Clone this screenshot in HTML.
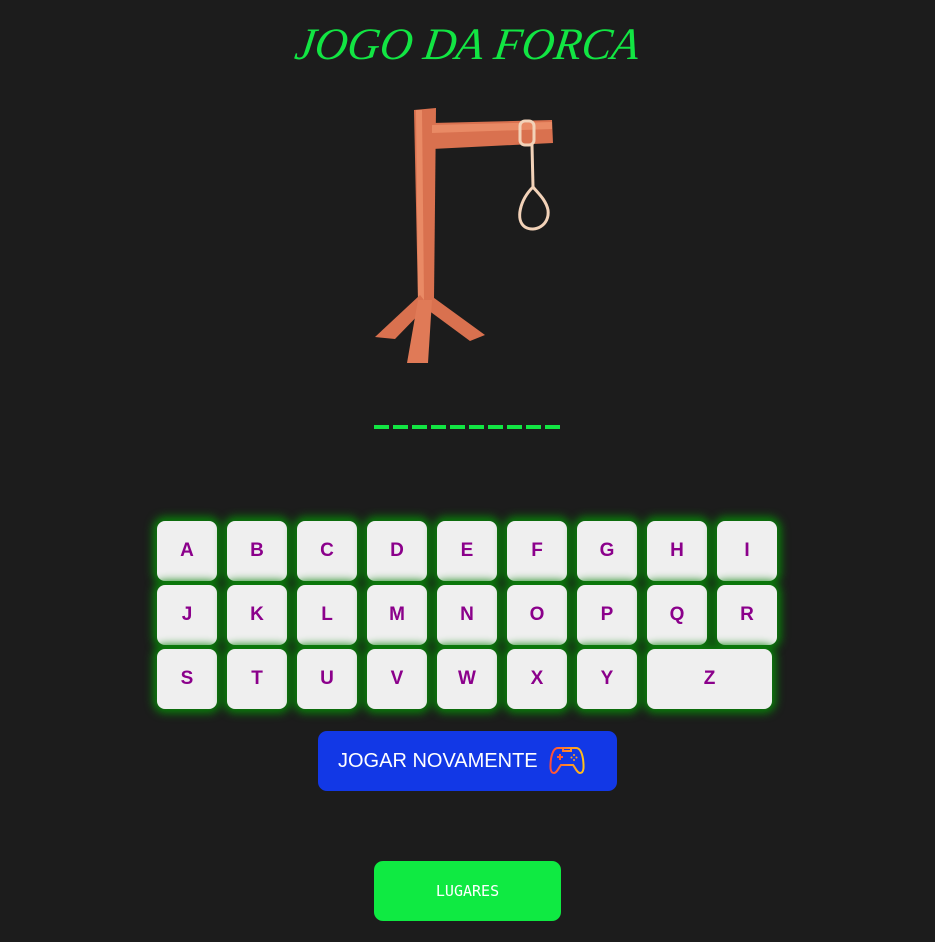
<!DOCTYPE html>
<html><head><style>
body{margin:0;background:#1c1c1c;width:935px;height:942px;position:relative;overflow:hidden;font-family:"Liberation Sans",sans-serif}
h1{position:absolute;top:18px;left:0;width:935px;text-align:center;margin:0;font:italic 45px "Liberation Serif",serif;color:#12e543;transform:skewX(-8deg)}
.k{position:absolute;width:60px;height:60px;background:#efefef;border-radius:8px;box-shadow:0 0 9px 4px #0a820a;color:#8b008b;font-weight:bold;font-size:19px;display:flex;align-items:center;justify-content:center}
.d{position:absolute;top:425px;height:4px;width:15px;background:#12e543}
</style></head><body>
<h1>JOGO DA FORCA</h1>
<svg style="position:absolute;left:370px;top:105px" width="190" height="262">
<polygon points="44,5 66,3 64,195 48,195" fill="#d9714f"/>
<polygon points="46,5 52,5 54,195 48,195" fill="#e98a65"/>
<polygon points="62,18 182,15 183,38 62,44" fill="#d9714f"/>
<polygon points="62,20 182,17 182,24 62,28" fill="#e98a65"/>
<polygon points="50,190 5,232 25,234 58,200" fill="#d9714f"/>
<polygon points="60,190 115,230 100,236 58,205" fill="#d9714f"/>
<polygon points="48,195 62,195 58,258 37,258" fill="#e07a57"/>
<rect x="150" y="16" width="14" height="24" rx="5" fill="none" stroke="#f2d2b8" stroke-width="3"/>
<line x1="162" y1="40" x2="163" y2="82" stroke="#f2d2b8" stroke-width="3"/>
<path d="M163 82 C150 95 145 115 155 122 C165 128 180 120 178 105 C176 95 168 88 163 82Z" fill="none" stroke="#f2d2b8" stroke-width="3"/>
</svg>
<div class="d" style="left:374px"></div><div class="d" style="left:393px"></div><div class="d" style="left:412px"></div><div class="d" style="left:431px"></div><div class="d" style="left:450px"></div><div class="d" style="left:469px"></div><div class="d" style="left:488px"></div><div class="d" style="left:507px"></div><div class="d" style="left:526px"></div><div class="d" style="left:545px"></div>
<div class="k" style="left:157px;top:521px">A</div><div class="k" style="left:227px;top:521px">B</div><div class="k" style="left:297px;top:521px">C</div><div class="k" style="left:367px;top:521px">D</div><div class="k" style="left:437px;top:521px">E</div><div class="k" style="left:507px;top:521px">F</div><div class="k" style="left:577px;top:521px">G</div><div class="k" style="left:647px;top:521px">H</div><div class="k" style="left:717px;top:521px">I</div>
<div class="k" style="left:157px;top:585px">J</div><div class="k" style="left:227px;top:585px">K</div><div class="k" style="left:297px;top:585px">L</div><div class="k" style="left:367px;top:585px">M</div><div class="k" style="left:437px;top:585px">N</div><div class="k" style="left:507px;top:585px">O</div><div class="k" style="left:577px;top:585px">P</div><div class="k" style="left:647px;top:585px">Q</div><div class="k" style="left:717px;top:585px">R</div>
<div class="k" style="left:157px;top:649px">S</div><div class="k" style="left:227px;top:649px">T</div><div class="k" style="left:297px;top:649px">U</div><div class="k" style="left:367px;top:649px">V</div><div class="k" style="left:437px;top:649px">W</div><div class="k" style="left:507px;top:649px">X</div><div class="k" style="left:577px;top:649px">Y</div><div class="k" style="left:647px;top:649px;width:125px">Z</div>
<div style="position:absolute;left:318px;top:731px;width:299px;height:60px;background:#1238e6;border-radius:9px;color:#fff;font-size:20px;line-height:60px">
<span style="position:absolute;left:20px">JOGAR NOVAMENTE</span>
<svg style="position:absolute;left:231px;top:14px" width="36" height="32" viewBox="0 0 36 32"><defs><linearGradient id="g" x1="0" x2="1"><stop offset="0" stop-color="#ff4a3a"/><stop offset="1" stop-color="#ffc21a"/></linearGradient></defs>
<path d="M9 3 H27 C31 3 33 8 34 14 C35 22 35 28 31 28 C28 28 26 22 24 20 H12 C10 22 8 28 5 28 C1 28 1 22 2 14 C3 8 5 3 9 3Z M14 3 V6 H22 V3" fill="none" stroke="url(#g)" stroke-width="2"/>
<path d="M8 12 h6 M11 9 v6" stroke="#ff5a30" stroke-width="2"/><circle cx="25" cy="10" r="1" fill="#ffa020"/><circle cx="25" cy="15" r="1" fill="#ffa020"/><circle cx="22.5" cy="12.5" r="1" fill="#ffa020"/><circle cx="27.5" cy="12.5" r="1" fill="#ffa020"/></svg>
</div>
<div style="position:absolute;left:374px;top:861px;width:187px;height:60px;background:#0fea42;border-radius:9px;color:#fff;font:15px/60px 'DejaVu Sans Mono',monospace;text-align:center">LUGARES</div>
</body></html>
